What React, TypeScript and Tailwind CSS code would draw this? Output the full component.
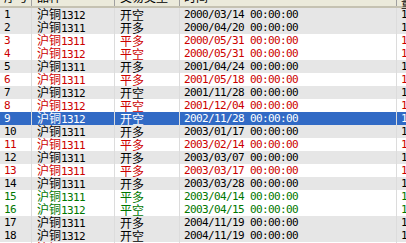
const rows: [string, string, string, string, 'k' | 'r' | 'g'][] = [
  ['1', '1312', '开空', '2000/03/14', 'k'],
  ['2', '1311', '开多', '2000/04/20', 'k'],
  ['3', '1311', '平多', '2000/05/31', 'r'],
  ['4', '1312', '平空', '2000/05/31', 'r'],
  ['5', '1311', '开多', '2001/04/24', 'k'],
  ['6', '1311', '平多', '2001/05/18', 'r'],
  ['7', '1312', '开空', '2001/11/28', 'k'],
  ['8', '1312', '平空', '2001/12/04', 'r'],
  ['9', '1312', '开空', '2002/11/28', 'k'],
  ['10', '1311', '开多', '2003/01/17', 'k'],
  ['11', '1311', '平多', '2003/02/14', 'r'],
  ['12', '1311', '开多', '2003/03/07', 'k'],
  ['13', '1311', '平多', '2003/03/17', 'r'],
  ['14', '1311', '开多', '2003/03/28', 'k'],
  ['15', '1311', '平多', '2003/04/14', 'g'],
  ['16', '1312', '平空', '2003/04/15', 'g'],
  ['17', '1311', '开多', '2004/11/19', 'k'],
  ['18', '1312', '开空', '2004/11/19', 'k'],
  ['19', '1311', '平多', '2004/12/03', 'r'],
]

const cjk = 'text-[12px] tracking-normal [font-family:"Noto_Sans_CJK_SC",sans-serif]'

function Cell({ w, children, last }: { w: string; children: React.ReactNode; last?: boolean }) {
  return (
    <div className={`${w} shrink-0 flex items-center pl-[4px] whitespace-nowrap overflow-hidden ${last ? '' : 'border-r border-[#dcdcdc]'}`}>
      {children}
    </div>
  )
}

export default function App() {
  return (
    <div className="w-[406px] h-[243px] overflow-hidden bg-white [font-family:'DejaVu_Sans_Mono',monospace] text-[11px] tracking-[-0.62px] leading-none">
      <div className="-mt-[12px]">
        {/* header, mostly scrolled out of view */}
        <div className="flex h-[20px] bg-[#ebeadb] border-b-2 border-[#c5c2b2] text-black">
          <div className="w-[32px] shrink-0 flex items-center pl-[4px] border-r border-[#a0a0a0]"><span className={cjk}>序号</span></div>
          <div className="w-[83px] shrink-0 flex items-center pl-[5px] border-r border-[#a0a0a0]"><span className={cjk}>品种</span></div>
          <div className="w-[65px] shrink-0 flex items-center pl-[5px] border-r border-[#a0a0a0]"><span className={cjk}>交易类型</span></div>
          <div className="w-[217px] shrink-0 flex items-center pl-[4px] border-r border-[#a0a0a0]"><span className={cjk}>时间</span></div>
          <div className="flex-1 flex items-center pl-[4px]"><span className={cjk}>数量</span></div>
        </div>
        {rows.map(([n, code, type, date, c]) => {
          const sel = n === '9'
          const color = sel ? 'bg-[#316ac5] text-white' : c === 'k' ? 'bg-[#e6e6e6] text-black' : c === 'r' ? 'bg-white text-[#cc0000]' : 'bg-white text-[#007700]'
          return (
            <div key={n} className={`flex h-[13px] ${color}`}>
              <Cell w="w-[32px]">{n}</Cell>
              <Cell w="w-[83px]">
                <span className="pl-[1px]"><span className={cjk}>沪铜</span>{code}</span>
              </Cell>
              <Cell w="w-[65px]">
                <span className={`${cjk} pl-[1px]`}>{type}</span>
              </Cell>
              <Cell w="w-[217px]">{date} 00:00:00</Cell>
              <Cell w="flex-1" last>1</Cell>
            </div>
          )
        })}
      </div>
    </div>
  )
}
